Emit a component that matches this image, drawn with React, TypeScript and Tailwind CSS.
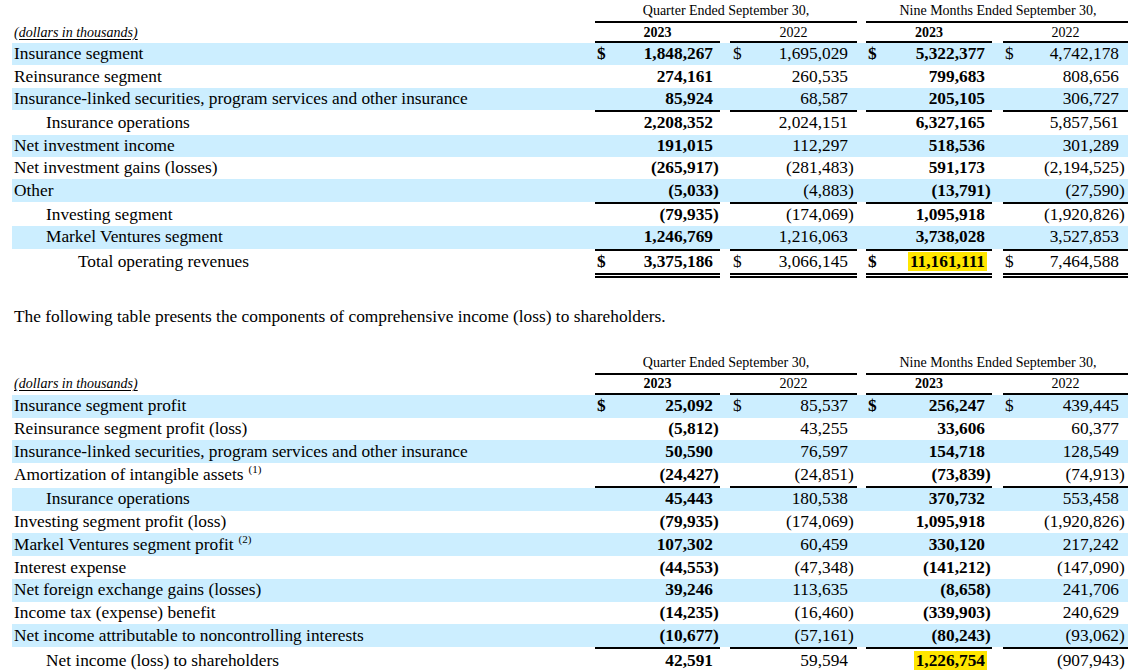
type Row = {
  label: string;
  sup?: string;
  indent?: 0 | 1 | 2;
  band?: boolean;
  dollar?: boolean;
  line?: "single" | "double";
  v: [string, string, string, string];
  mark?: number;
};

// column groups: quarter 2023 / 2022, nine months 2023 / 2022
const GROUPS = [
  { box: "w-[125px]", bold: true, slot: "w-[7px]", dpl: "pl-[2px]" },
  { box: "ml-[10px] w-[127px]", bold: false, slot: "w-[9px]", dpl: "pl-[3px]" },
  { box: "ml-[9px] w-[126px]", bold: true, slot: "w-[7px]", dpl: "pl-[2px]" },
  { box: "ml-[11px] w-[125px]", bold: false, slot: "w-[9px]", dpl: "pl-[2px]" },
];

const INDENT = ["pl-[2px]", "pl-[34px]", "pl-[66px]"];

const REVENUES: Row[] = [
  { label: "Insurance segment", band: true, dollar: true, v: ["1,848,267", "1,695,029", "5,322,377", "4,742,178"] },
  { label: "Reinsurance segment", v: ["274,161", "260,535", "799,683", "808,656"] },
  {
    label: "Insurance-linked securities, program services and other insurance",
    band: true,
    line: "single",
    v: ["85,924", "68,587", "205,105", "306,727"],
  },
  { label: "Insurance operations", indent: 1, v: ["2,208,352", "2,024,151", "6,327,165", "5,857,561"] },
  { label: "Net investment income", band: true, v: ["191,015", "112,297", "518,536", "301,289"] },
  { label: "Net investment gains (losses)", v: ["(265,917)", "(281,483)", "591,173", "(2,194,525)"] },
  { label: "Other", band: true, line: "single", v: ["(5,033)", "(4,883)", "(13,791)", "(27,590)"] },
  { label: "Investing segment", indent: 1, v: ["(79,935)", "(174,069)", "1,095,918", "(1,920,826)"] },
  {
    label: "Markel Ventures segment",
    indent: 1,
    band: true,
    line: "single",
    v: ["1,246,769", "1,216,063", "3,738,028", "3,527,853"],
  },
  {
    label: "Total operating revenues",
    indent: 2,
    dollar: true,
    line: "double",
    mark: 2,
    v: ["3,375,186", "3,066,145", "11,161,111", "7,464,588"],
  },
];

const INCOME: Row[] = [
  { label: "Insurance segment profit", band: true, dollar: true, v: ["25,092", "85,537", "256,247", "439,445"] },
  { label: "Reinsurance segment profit (loss)", v: ["(5,812)", "43,255", "33,606", "60,377"] },
  {
    label: "Insurance-linked securities, program services and other insurance",
    band: true,
    v: ["50,590", "76,597", "154,718", "128,549"],
  },
  {
    label: "Amortization of intangible assets",
    sup: "(1)",
    line: "single",
    v: ["(24,427)", "(24,851)", "(73,839)", "(74,913)"],
  },
  { label: "Insurance operations", indent: 1, band: true, v: ["45,443", "180,538", "370,732", "553,458"] },
  { label: "Investing segment profit (loss)", v: ["(79,935)", "(174,069)", "1,095,918", "(1,920,826)"] },
  { label: "Markel Ventures segment profit", sup: "(2)", band: true, v: ["107,302", "60,459", "330,120", "217,242"] },
  { label: "Interest expense", v: ["(44,553)", "(47,348)", "(141,212)", "(147,090)"] },
  { label: "Net foreign exchange gains (losses)", band: true, v: ["39,246", "113,635", "(8,658)", "241,706"] },
  { label: "Income tax (expense) benefit", v: ["(14,235)", "(16,460)", "(339,903)", "240,629"] },
  {
    label: "Net income attributable to noncontrolling interests",
    band: true,
    line: "single",
    v: ["(10,677)", "(57,161)", "(80,243)", "(93,062)"],
  },
  {
    label: "Net income (loss) to shareholders",
    indent: 1,
    mark: 2,
    v: ["42,591", "59,594", "1,226,754", "(907,943)"],
  },
];

function LineRow({ kind }: { kind: "single" | "double" }) {
  return (
    <div className="flex">
      <div className="w-[583px] shrink-0" />
      {GROUPS.map((g, i) => (
        <div
          key={i}
          className={`${g.box} shrink-0 ${
            kind === "single" ? "h-[2px] bg-black" : "h-[5px] border-y-2 border-black"
          }`}
        />
      ))}
    </div>
  );
}

function Value({ g, value, dollar, mark }: { g: (typeof GROUPS)[number]; value: string; dollar?: boolean; mark?: boolean }) {
  const neg = value.endsWith(")");
  const digits = neg ? value.slice(0, -1) : value;
  return (
    <div className={`${g.box} flex shrink-0 items-center ${g.bold ? "font-bold" : ""}`}>
      <span className={g.dpl}>{dollar ? "$" : ""}</span>
      <span className="ml-auto">
        <span className={mark ? "-mx-[2px] bg-[#ffe600] px-[2px]" : ""}>{digits}</span>
      </span>
      <span className={`${g.slot} shrink-0`}>{neg ? ")" : ""}</span>
    </div>
  );
}

function Table({ rows, rowH }: { rows: Row[]; rowH: string }) {
  return (
    <div className="w-[1116px]">
      {/* period headings */}
      <div className="flex h-[21px] items-center text-[14px]">
        <div className="w-[583px] shrink-0" />
        <div className="w-[262px] shrink-0 text-center">Quarter Ended September 30,</div>
        <div className="ml-[9px] w-[262px] shrink-0 pl-[2px] text-center">Nine Months Ended September 30,</div>
      </div>
      <div className="flex">
        <div className="w-[583px] shrink-0" />
        <div className="h-[2px] w-[262px] shrink-0 bg-black" />
        <div className="ml-[9px] h-[2px] w-[262px] shrink-0 bg-black" />
      </div>
      <div className="flex h-[18px] items-center text-[14px]">
        <div className="w-[583px] shrink-0 pl-[2px] italic underline underline-offset-2">(dollars in thousands)</div>
        {["2023", "2022", "2023", "2022"].map((y, i) => (
          <div key={i} className={`${GROUPS[i].box} shrink-0 text-center ${GROUPS[i].bold ? "font-bold" : ""}`}>
            {y}
          </div>
        ))}
      </div>
      <LineRow kind="single" />

      {rows.map((r, ri) => (
        <div key={ri}>
          <div className={`flex ${rowH} items-center text-[17.33px] ${r.band ? "bg-[#cceeff]" : ""}`}>
            <div className={`w-[583px] shrink-0 whitespace-nowrap ${INDENT[r.indent ?? 0]}`}>
              {r.label}
              {r.sup && <span className="ml-[5px] align-super text-[11px] leading-none">{r.sup}</span>}
            </div>
            {r.v.map((val, i) => (
              <Value key={i} g={GROUPS[i]} value={val} dollar={r.dollar} mark={r.mark === i} />
            ))}
          </div>
          {r.line && <LineRow kind={r.line} />}
        </div>
      ))}
    </div>
  );
}

export default function App() {
  return (
    <div className="h-[670px] w-[1137px] overflow-hidden bg-white pl-[12px] font-['Liberation_Serif','Times_New_Roman',serif] text-black">
      <Table rows={REVENUES} rowH="h-[22.4px]" />
      <p className="mt-[30px] pl-[2px] text-[17.33px] leading-[18px]">
        The following table presents the components of comprehensive income (loss) to shareholders.
      </p>
      <div className="mt-[26px]">
        <Table rows={INCOME} rowH="h-[22.75px]" />
      </div>
    </div>
  );
}
